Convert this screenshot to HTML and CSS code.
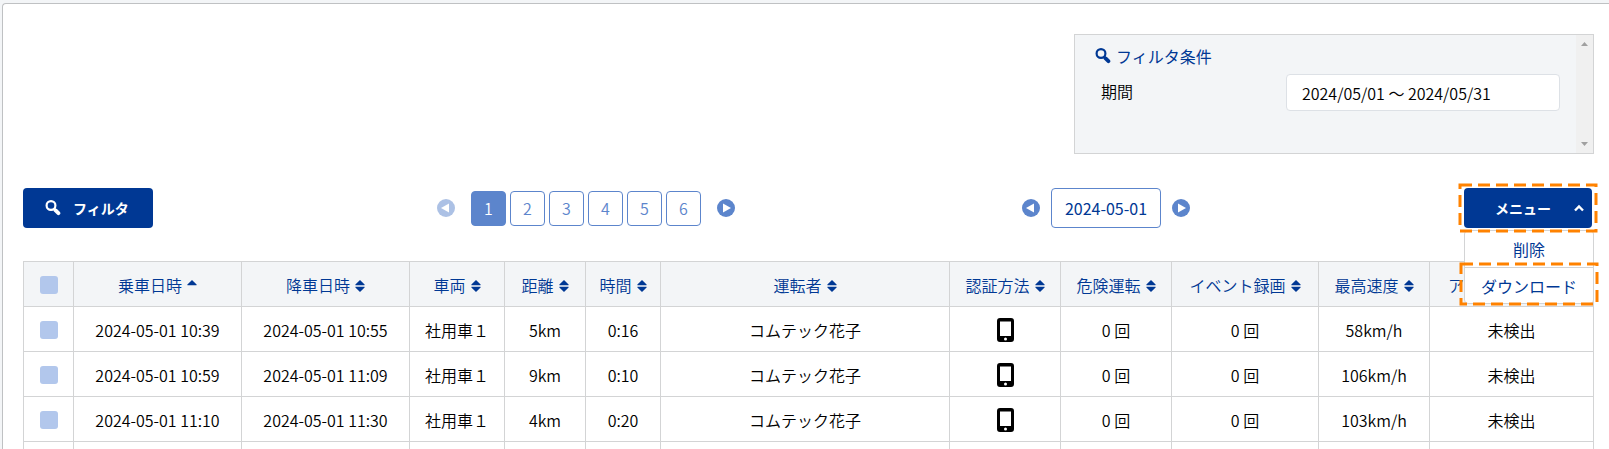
FILE: index.html
```
<!DOCTYPE html>
<html lang="ja">
<head>
<meta charset="utf-8">
<title>運行一覧</title>
<link rel="stylesheet" href="styles.css">
</head>
<body>
<svg class="defs" aria-hidden="true">
  <symbol id="search" viewBox="0 0 16 16"><circle cx="6" cy="5.500" r="4.400" fill="none" stroke="currentColor" stroke-width="2.200"/><path d="M8.800 8.600l1.800 1.800" stroke="currentColor" stroke-width="2.600"/><path d="M10.600 10.400l2.800 2.800" stroke="currentColor" stroke-width="3.800" stroke-linecap="round"/></symbol>
  <symbol id="prev" viewBox="0 0 18 18"><circle cx="9" cy="9" r="9" fill="currentColor"/><path d="M12 4.500v9L4 9z" fill="#fff"/></symbol>
  <symbol id="next" viewBox="0 0 18 18"><circle cx="9" cy="9" r="9" fill="currentColor"/><path d="M6 4.500v9L14 9z" fill="#fff"/></symbol>
  <symbol id="sort" viewBox="0 0 10 12"><path d="M5 0l4.600 4.500c.2.3 0 .8-.4.8H.8C.4 5.300.2 4.800.4 4.500zM5 12l4.600-4.500c.2-.3 0-.8-.4-.8H.8c-.4 0-.6.5-.4.8z" fill="currentColor"/></symbol>
  <symbol id="asc" viewBox="0 0 10 12"><path d="M5 0l4.600 4.500c.2.3 0 .8-.4.8H.8C.4 5.300.2 4.800.4 4.500z" fill="currentColor"/></symbol>
  <symbol id="phone" viewBox="0 0 17 24"><path fill-rule="evenodd" d="M3 0h11a3 3 0 0 1 3 3v18a3 3 0 0 1-3 3H3a3 3 0 0 1-3-3V3a3 3 0 0 1 3-3zM3 3.500v14.500h11V3.500zM8.500 19.500a1.500 1.500 0 1 0 0 3a1.500 1.500 0 1 0 0-3z" fill="currentColor"/></symbol>
</svg>
<main class="card">
  <section class="conditions">
    <div class="conditions-body">
      <h2 class="conditions-title"><svg class="icon-search"><use href="#search"/></svg>フィルタ条件</h2>
      <div class="field">
        <label for="period">期間</label>
        <input id="period" class="field-input" type="text" value="2024/05/01 ～ 2024/05/31">
      </div>
    </div>
    <div class="scroll-track" aria-hidden="true">
      <svg class="scroll-arrow" viewBox="0 0 7 4"><path d="M0 4h7L3.500 0z"/></svg>
      <svg class="scroll-arrow" viewBox="0 0 7 4"><path d="M0 0h7L3.500 4z"/></svg>
    </div>
  </section>

  <div class="toolbar">
    <button class="btn btn-filter" type="button"><svg class="icon-search"><use href="#search"/></svg>フィルタ</button>
    <nav class="pager" aria-label="ページ">
      <button class="round is-disabled" type="button" aria-label="前のページ"><svg><use href="#prev"/></svg></button>
      <div class="pages">
        <a class="page is-current" href="#1">1</a>
        <a class="page" href="#2">2</a>
        <a class="page" href="#3">3</a>
        <a class="page" href="#4">4</a>
        <a class="page" href="#5">5</a>
        <a class="page" href="#6">6</a>
      </div>
      <button class="round" type="button" aria-label="次のページ"><svg><use href="#next"/></svg></button>
    </nav>
    <div class="datenav">
      <button class="round" type="button" aria-label="前日"><svg><use href="#prev"/></svg></button>
      <button class="date" type="button">2024-05-01</button>
      <button class="round" type="button" aria-label="翌日"><svg><use href="#next"/></svg></button>
    </div>
    <div class="menu">
      <button class="btn btn-menu" type="button" aria-expanded="true"><span class="menu-label">メニュー</span><svg class="chevron" viewBox="0 0 10 8"><path d="M1 6.500l4-4 4 4" fill="none" stroke="currentColor" stroke-width="2.400"/></svg></button>
      <div class="menu-list">
        <button class="menu-item" type="button">削除</button>
        <button class="menu-item" type="button">ダウンロード</button>
      </div>
      <svg class="mark mark-button"><rect/></svg>
      <svg class="mark mark-download"><rect/></svg>
    </div>
  </div>

  <table class="trips">
    <colgroup>
      <col class="w-check"><col class="w-time"><col class="w-time"><col class="w-car"><col class="w-distance"><col class="w-duration"><col><col class="w-medium"><col class="w-medium"><col class="w-event"><col class="w-medium"><col class="w-alcohol">
    </colgroup>
    <thead>
      <tr>
        <th><input class="check" type="checkbox" aria-label="すべて選択"></th>
        <th>乗車日時<svg class="sort"><use href="#asc"/></svg></th>
        <th>降車日時<svg class="sort"><use href="#sort"/></svg></th>
        <th>車両<svg class="sort"><use href="#sort"/></svg></th>
        <th>距離<svg class="sort"><use href="#sort"/></svg></th>
        <th>時間<svg class="sort"><use href="#sort"/></svg></th>
        <th>運転者<svg class="sort"><use href="#sort"/></svg></th>
        <th>認証方法<svg class="sort"><use href="#sort"/></svg></th>
        <th>危険運転<svg class="sort"><use href="#sort"/></svg></th>
        <th>イベント録画<svg class="sort"><use href="#sort"/></svg></th>
        <th>最高速度<svg class="sort"><use href="#sort"/></svg></th>
        <th class="th-start">ア</th>
      </tr>
    </thead>
    <tbody>
      <tr><td><input class="check" type="checkbox" aria-label="選択"></td><td>2024-05-01 10:39</td><td>2024-05-01 10:55</td><td>社用車１</td><td>5km</td><td>0:16</td><td>コムテック花子</td><td><svg class="phone"><use href="#phone"/></svg></td><td>0 回</td><td>0 回</td><td>58km/h</td><td>未検出</td></tr>
      <tr><td><input class="check" type="checkbox" aria-label="選択"></td><td>2024-05-01 10:59</td><td>2024-05-01 11:09</td><td>社用車１</td><td>9km</td><td>0:10</td><td>コムテック花子</td><td><svg class="phone"><use href="#phone"/></svg></td><td>0 回</td><td>0 回</td><td>106km/h</td><td>未検出</td></tr>
      <tr><td><input class="check" type="checkbox" aria-label="選択"></td><td>2024-05-01 11:10</td><td>2024-05-01 11:30</td><td>社用車１</td><td>4km</td><td>0:20</td><td>コムテック花子</td><td><svg class="phone"><use href="#phone"/></svg></td><td>0 回</td><td>0 回</td><td>103km/h</td><td>未検出</td></tr>
      <tr><td></td><td></td><td></td><td></td><td></td><td></td><td></td><td></td><td></td><td></td><td></td><td></td></tr>
    </tbody>
  </table>
</main>
</body>
</html>
```
FILE: styles.css
```
:root {
  --navy: #003894;
  --blue: #5c85cc;
  --line: #d3d4d5;
  --pale: #f3f5f7;
}

* { box-sizing: border-box; }

html { overflow: hidden; }

body {
  margin: 0;
  padding: 3px 0 0 2px;
  background: var(--pale);
  color: #000;
  font: 350 16px/24px "Noto Sans CJK JP", "Noto Sans", sans-serif;
}

button, input { font: inherit; margin: 0; }
button { cursor: pointer; white-space: nowrap; }

.defs { position: absolute; width: 0; height: 0; }

.card {
  padding: 30px 15px 20px 20px;
  background: #fff;
  border: 1px solid #bfc1c3;
  border-right: 0;
  border-radius: 4px 0 0 0;
}

.conditions {
  display: flex;
  width: 520px;
  height: 120px;
  margin-left: auto;
  border: 1px solid var(--line);
  background: var(--pale);
}
.conditions-body { flex: 1; padding: 9px 16px 0 20px; }
.conditions-title {
  display: flex;
  align-items: center;
  gap: 5px;
  margin: 0;
  font-size: 16px;
  font-weight: 400;
  color: var(--navy);
}
.icon-search { width: 16px; height: 16px; }

.field { display: flex; margin-top: 6px; padding-left: 6px; }
.field label { flex: 1; padding-top: 5px; }
.field-input {
  width: 274px;
  height: 37px;
  padding: 0 15px;
  border: 1px solid #dde1e6;
  border-radius: 4px;
  background: #fff;
  color: #000;
}

.scroll-track {
  display: flex;
  flex-direction: column;
  align-items: center;
  justify-content: space-between;
  width: 17px;
  padding: 7px 0;
  background: #f0f0f0;
}
.scroll-arrow { width: 7px; height: 4px; fill: #a0a0a0; }

.toolbar {
  display: grid;
  grid-template-columns: 130px 284fr auto 287fr auto 274fr 130px;
  align-items: center;
  margin: 34px 0 33px;
}
.btn {
  display: flex;
  align-items: center;
  height: 40px;
  border: 0;
  border-radius: 4px;
  background: var(--navy);
  color: #fff;
  font-size: 14px;
  font-weight: 700;
}
.btn-filter { grid-column: 1; gap: 12px; padding: 0 0 0 22px; }
.pager { grid-column: 3; display: flex; align-items: center; gap: 16px; }
.datenav { grid-column: 5; display: flex; align-items: center; gap: 11px; }
.menu { grid-column: 7; position: relative; padding-right: 2px; }

.round {
  width: 18px;
  height: 18px;
  padding: 0;
  border: 0;
  background: none;
  color: var(--blue);
}
.round svg { display: block; width: 18px; height: 18px; }
.is-disabled { opacity: .5; }

.pages { display: flex; gap: 4px; }
.page {
  width: 35px;
  height: 35px;
  border: 1px solid var(--blue);
  border-radius: 4px;
  color: var(--blue);
  line-height: 33px;
  text-align: center;
  text-decoration: none;
}
.is-current { background: var(--blue); color: #fff; }

.date {
  width: 110px;
  height: 40px;
  padding: 0;
  border: 1px solid var(--blue);
  border-radius: 4px;
  background: #fff;
  color: var(--navy);
  font-weight: 400;
}

.btn-menu { width: 100%; padding: 0 8px; }
.menu-label { flex: 1; }
.chevron { width: 10px; height: 8px; }
.menu-list {
  position: absolute;
  z-index: 1;
  top: 42px;
  left: 0;
  width: 100%;
  border: 1px solid var(--line);
  border-radius: 4px;
  background: #fff;
}
.menu-item {
  display: block;
  width: 100%;
  height: 36px;
  padding: 0;
  border: 0;
  background: none;
  color: var(--navy);
  font-weight: 400;
}
.menu-item + .menu-item { border-top: 1px solid var(--line); }

.mark { position: absolute; z-index: 2; overflow: visible; pointer-events: none; }
.mark rect {
  width: 100%;
  height: 100%;
  fill: none;
  stroke: #ff8200;
  stroke-width: 3px;
  stroke-dasharray: 12px 6px;
}
.mark-button { top: -3px; left: -4px; width: 136px; height: 46px; }
.mark-download { top: 76px; left: -3px; width: 136px; height: 40px; }

.trips {
  width: 100%;
  table-layout: fixed;
  border-collapse: collapse;
  text-align: center;
}
.trips th, .trips td {
  height: 45px;
  padding: 2px 0 0;
  border: 1px solid var(--line);
  font-weight: inherit;
  white-space: nowrap;
}
.trips th { background: var(--pale); color: var(--navy); }
.trips .th-start { padding-left: 18px; text-align: left; }

.w-check { width: 50px; }
.w-time { width: 168px; }
.w-car { width: 95px; }
.w-distance { width: 81px; }
.w-duration { width: 75px; }
.w-medium { width: 111px; }
.w-event { width: 147px; }
.w-alcohol { width: 164px; }

.sort { width: 10px; height: 12px; margin-left: 5px; }
.phone { display: block; width: 17px; height: 24px; margin: 0 auto; color: #000; }

.check {
  display: block;
  width: 18px;
  height: 18px;
  margin: 0 auto;
  appearance: none;
  border-radius: 3px;
  background: #b2c7ec;
}
```
